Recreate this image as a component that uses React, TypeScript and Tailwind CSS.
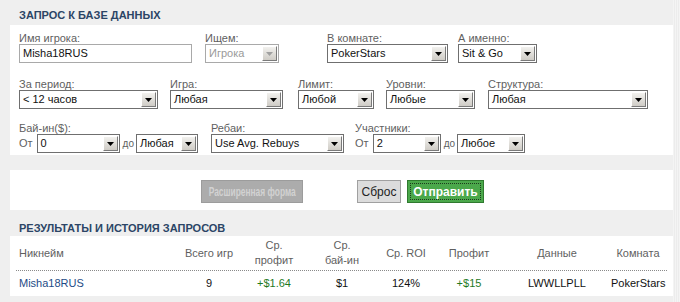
import React from 'react';

const font = { fontFamily: '"Liberation Sans", Arial, sans-serif' };

interface SelectProps {
  value: string;
  width: string;
  disabled?: boolean;
}

// XP-style combo box: white field and a little grey arrow button
const Select: React.FC<SelectProps> = ({ value, width, disabled }) => (
  <div
    className={`${width} h-[19px] flex items-center bg-white border ${
      disabled ? 'border-[#a9a9a9]' : 'border-[#6f6f6f]'
    }`}
  >
    <span
      className={`flex-1 pl-[3px] text-[11px] leading-[17px] truncate ${
        disabled ? 'text-[#9a9a9a]' : 'text-[#111]'
      }`}
    >
      {value}
    </span>
    <div className="w-[15px] h-[15px] mr-[1px] flex items-center justify-center bg-gradient-to-b from-[#f2f1ee] to-[#cfccc6] border border-t-[#ffffff] border-l-[#ffffff] border-r-[#7a7a7a] border-b-[#7a7a7a]">
      <svg width="7" height="4" viewBox="0 0 7 4">
        <path d="M0 0h7L3.5 4z" fill={disabled ? '#a0a0a0' : '#000'} />
      </svg>
    </div>
  </div>
);

const Label: React.FC<{ text: string }> = ({ text }) => (
  <div className="h-[14px] leading-[14px] text-[11px] text-[#5f5f5f] mb-[-1px] whitespace-nowrap">{text}</div>
);

const Small: React.FC<{ text: string }> = ({ text }) => (
  <span className="text-[11px] text-[#5f5f5f] leading-[19px]">{text}</span>
);

const cols = [
  { head: ['Всего игр'], val: '9', w: 'w-[64px]' },
  { head: ['Ср.', 'профит'], val: '+$1.64', w: 'w-[66px]', green: true },
  { head: ['Ср.', 'бай-ин'], val: '$1', w: 'w-[70px]' },
  { head: ['Ср. ROI'], val: '124%', w: 'w-[58px]' },
  { head: ['Профит'], val: '+$15', w: 'w-[68px]', green: true },
  { head: ['Данные'], val: 'LWWLLPLL', w: 'w-[108px]' },
  { head: ['Комната'], val: 'PokerStars', w: 'w-[54px]' },
];

export default function App() {
  return (
    <div className="w-[680px] h-[302px] bg-[#efefef] overflow-hidden flex" style={font}>
      <div className="w-[673px] pl-[10px]">
        {/* query title */}
        <div className="h-[25px] pt-[8px] pl-[9px] text-[11px] leading-[14px] font-bold text-[#2b4566]">
          ЗАПРОС К БАЗЕ ДАННЫХ
        </div>

        {/* query form */}
        <div className="bg-white h-[130px] pl-[9px] pt-[6px]">
          <div className="flex">
            <div>
              <Label text="Имя игрока:" />
              <div className="w-[173px] h-[19px] border border-[#a9a9a9] pl-[3px] text-[11px] leading-[17px] text-[#111]">
                Misha18RUS
              </div>
            </div>
            <div className="ml-[13px]">
              <Label text="Ищем:" />
              <Select value="Игрока" width="w-[74px]" disabled />
            </div>
            <div className="ml-[48px]">
              <Label text="В комнате:" />
              <Select value="PokerStars" width="w-[121px]" />
            </div>
            <div className="ml-[10px]">
              <Label text="А именно:" />
              <Select value="Sit & Go" width="w-[79px]" />
            </div>
          </div>

          <div className="flex mt-[14px]">
            <div>
              <Label text="За период:" />
              <Select value="< 12 часов" width="w-[139px]" />
            </div>
            <div className="ml-[12px]">
              <Label text="Игра:" />
              <Select value="Любая" width="w-[113px]" />
            </div>
            <div className="ml-[15px]">
              <Label text="Лимит:" />
              <Select value="Любой" width="w-[76px]" />
            </div>
            <div className="ml-[12px]">
              <Label text="Уровни:" />
              <Select value="Любые" width="w-[89px]" />
            </div>
            <div className="ml-[13px]">
              <Label text="Структура:" />
              <Select value="Любая" width="w-[160px]" />
            </div>
          </div>

          <div className="flex mt-[12px]">
            <div>
              <Label text="Бай-ин($):" />
              <div className="flex items-center">
                <Small text="От" />
                <div className="ml-[4px]">
                  <Select value="0" width="w-[83px]" />
                </div>
                <span className="ml-[3px] mr-[2px] text-[10px] text-[#5f5f5f]">до</span>
                <Select value="Любая" width="w-[62px]" />
              </div>
            </div>
            <div className="ml-[13px]">
              <Label text="Ребаи:" />
              <Select value="Use Avg. Rebuys" width="w-[133px]" />
            </div>
            <div className="ml-[11px]">
              <Label text="Участники:" />
              <div className="flex items-center">
                <Small text="От" />
                <div className="ml-[4px]">
                  <Select value="2" width="w-[68px]" />
                </div>
                <span className="ml-[3px] mr-[2px] text-[10px] text-[#5f5f5f]">до</span>
                <Select value="Любое" width="w-[68px]" />
              </div>
            </div>
          </div>
        </div>

        {/* buttons */}
        <div className="bg-white h-[40px] mt-[15px] flex items-start pt-[10px]">
          <div className="ml-[191px] w-[102px] h-[23px] bg-[#acacac] border border-[#9c9c9c] flex items-center justify-center overflow-hidden">
            <span className="inline-block whitespace-nowrap text-[12px] font-bold text-[#d2d2d2] scale-x-[0.7]">
              Расширенная форма
            </span>
          </div>
          <div className="ml-[54px] w-[44px] h-[23px] bg-[#dcdcdc] border border-[#a0a0a0] flex items-center justify-center text-[12px] text-[#222]">
            Сброс
          </div>
          <div className="ml-[6px] w-[77px] h-[23px] bg-[#4ba84b] border border-[#2f7a2f] p-[2px]">
            <div className="w-full h-full border border-dotted border-[#1c3a1c] flex items-center justify-center text-[12px] font-bold text-white whitespace-nowrap">
              Отправить
            </div>
          </div>
        </div>

        {/* results title */}
        <div className="h-[26px] pt-[11px] pl-[9px] text-[11px] leading-[14px] font-bold text-[#2b4566]">
          РЕЗУЛЬТАТЫ И ИСТОРИЯ ЗАПРОСОВ
        </div>

        {/* results table */}
        <div className="bg-white h-[60px] px-[6px]">
          <div className="flex h-[35px] items-center border-b border-dotted border-[#8a8a8a] text-[11px] leading-[15px] text-[#5f5f5f]">
            <div className="w-[161px] pl-[3px]">Никнейм</div>
            {cols.map((c) => (
              <div key={c.val} className={`${c.w} text-center`}>
                {c.head.map((h) => (
                  <div key={h}>{h}</div>
                ))}
              </div>
            ))}
          </div>
          <div className="flex h-[24px] items-center text-[11px] text-[#111]">
            <div className="w-[161px] pl-[3px] text-[#1d4b86]">Misha18RUS</div>
            {cols.map((c) => (
              <div key={c.val} className={`${c.w} text-center ${c.green ? 'text-[#1f7a1f]' : ''}`}>
                {c.val}
              </div>
            ))}
          </div>
        </div>
      </div>
      <div className="flex-1 bg-[repeating-linear-gradient(90deg,#f4f4f4_0px,#f4f4f4_1px,#ececec_1px,#ececec_2px)]" />
    </div>
  );
}
